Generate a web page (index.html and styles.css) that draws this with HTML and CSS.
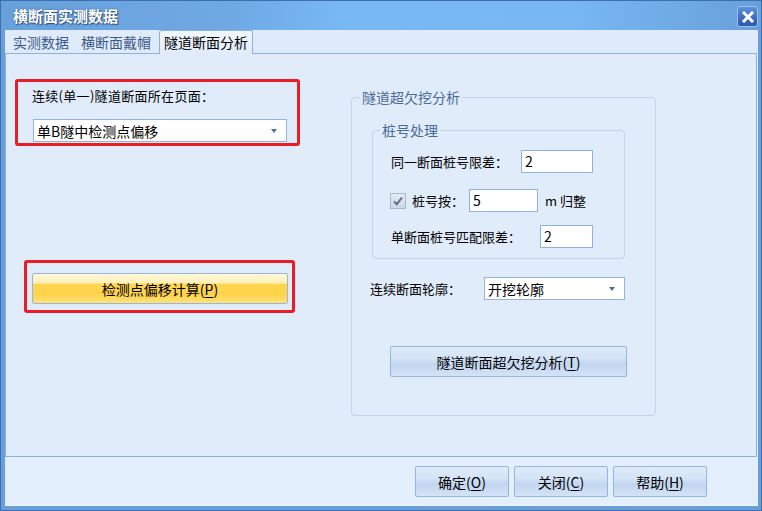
FILE: index.html
```html
<!DOCTYPE html>
<html lang="zh-CN">
<head>
<meta charset="utf-8">
<title>横断面实测数据</title>
<link rel="stylesheet" href="styles.css">
</head>
<body>
<div class="window">
  <div class="titlebar">
    <span class="title">横断面实测数据</span>
    <span class="close">
      <svg width="12" height="12" viewBox="0 0 12 12"><path d="M2 2 L10 10 M10 2 L2 10" stroke="#ffffff" stroke-width="3" stroke-linecap="square"/></svg>
    </span>
  </div>
  <div class="body">
    <div class="tabs">
      <div class="tab">实测数据</div>
      <div class="tab">横断面戴帽</div>
      <div class="tab active">隧道断面分析</div>
    </div>
    <div class="panel">
      <div class="left">
        <div class="redbox box1">
          <div class="label">连续(单一)隧道断面所在页面：</div>
          <div class="select sel-page"><span>单B隧中检测点偏移</span><i class="arrow"></i></div>
        </div>
        <div class="redbox box2">
          <div class="btn yellow calc">检测点偏移计算(<u>P</u>)</div>
        </div>
      </div>
      <fieldset class="group outer">
        <legend>隧道超欠挖分析</legend>
        <fieldset class="group inner">
          <legend>桩号处理</legend>
          <div class="row r1"><span class="lbl">同一断面桩号限差：</span><span class="input in1">2</span></div>
          <div class="row r2">
            <span class="check"><svg width="12" height="12" viewBox="0 0 12 12"><path d="M2 6.5 L4.8 9.2 L10 2.5" fill="none" stroke="#5a6e8c" stroke-width="2"/></svg></span>
            <span class="lbl">桩号按：</span><span class="input in2">5</span><span class="unit">m 归整</span>
          </div>
          <div class="row r3"><span class="lbl">单断面桩号匹配限差：</span><span class="input in3">2</span></div>
        </fieldset>
        <div class="row contour"><span class="lbl">连续断面轮廓：</span><div class="select sel-contour"><span>开挖轮廓</span><i class="arrow"></i></div></div>
        <div class="btn blue analyze">隧道断面超欠挖分析(<u>T</u>)</div>
      </fieldset>
    </div>
    <div class="footer">
      <div class="btn blue fbtn">确定(<u>O</u>)</div>
      <div class="btn blue fbtn">关闭(<u>C</u>)</div>
      <div class="btn blue fbtn last">帮助(<u>H</u>)</div>
    </div>
  </div>
</div>
</body>
</html>
```

FILE: styles.css
```css
* { box-sizing: border-box; }
html, body { margin: 0; padding: 0; }
body {
  width: 762px;
  height: 511px;
  overflow: hidden;
  font-family: "Noto Sans CJK SC", "Noto Sans", sans-serif;
  font-size: 13px;
  color: #000;
}
.window {
  width: 762px;
  height: 511px;
  border: 1px solid #3d6db5;
  background: #6a9ed9;
  display: flex;
  flex-direction: column;
}
.titlebar {
  height: 29px;
  flex: none;
  display: flex;
  align-items: center;
  justify-content: space-between;
  padding: 0 3px 0 12px;
  background: linear-gradient(to right, #68a0d9 0%, #6fa9e4 30%, #78b8f4 45%, #78b7f3 75%, #68a0d9 100%);
}
.title {
  font-size: 15px;
  font-weight: bold;
  color: #fff;
  text-shadow: 1px 1px 1px #2f4f80, 0 0 2px #3a5f95;
  line-height: 20px;
}
.close {
  width: 21px;
  height: 21px;
  margin-top: 2px;
  border: 1px solid #9cc0ec;
  border-radius: 3px;
  background: linear-gradient(to bottom, #5f92dc 0%, #3e70c4 50%, #2a5ab0 100%);
  display: flex;
  align-items: center;
  justify-content: center;
}
.body {
  flex: 1;
  margin: 0 3px 4px 4px;
  background: #e3effd;
  display: flex;
  flex-direction: column;
  border-bottom: 1px solid #f0f6fe;
}
.tabs {
  height: 23px;
  flex: none;
  display: flex;
  align-items: flex-end;
  padding-left: 2px;
  background: #dfebfa;
  position: relative;
  z-index: 1;
}
.tab {
  height: 22px;
  line-height: 22px;
  padding: 0 6px;
  font-size: 14px;
  color: #3c5a88;
}
.tab.active {
  margin-left: 2px;
  height: 24px;
  margin-bottom: -1px;
  padding: 0 4px;
  color: #000;
  background: linear-gradient(to bottom, #f2f7fe 0%, #e0ecfb 100%);
  border: 1px solid #8cb2e2;
  border-bottom: none;
  border-radius: 3px 3px 0 0;
  line-height: 22px;
}
.panel {
  height: 404px;
  flex: none;
  border: 1px solid #8cb2e2;
  background: #e0ecfa;
  display: flex;
  align-items: flex-start;
  margin-right: 1px;
}
.left {
  width: 285px;
  margin-left: 9px;
  margin-top: 25px;
  display: flex;
  flex-direction: column;
}
.redbox {
  border: 3px solid #ea1c24;
  border-radius: 3px;
}
.box1 {
  height: 67px;
  padding: 5px 0 0 14px;
}
.label {
  line-height: 18px;
  font-size: 13px;
  letter-spacing: 0.3px;
}
.select {
  height: 23px;
  background: #fff;
  border: 1px solid #92b3de;
  display: flex;
  align-items: center;
  justify-content: space-between;
  padding: 0 9px 0 3px;
  font-size: 14px;
}
.arrow {
  width: 0;
  height: 0;
  border-left: 3.5px solid transparent;
  border-right: 3.5px solid transparent;
  border-top: 4px solid #4d6f9f;
  margin-top: 1px;
}
.sel-page {
  width: 254px;
  margin-top: 14px;
  margin-left: 1px;
}
.box2 {
  margin-top: 114px;
  margin-left: 9px;
  width: 271px;
  height: 53px;
  padding: 10px 4px 0 5px;
}
.btn {
  height: 31px;
  border: 1px solid #98b6dd;
  border-radius: 2px;
  display: flex;
  align-items: center;
  justify-content: center;
  font-size: 14px;
}
.btn u { text-underline-offset: 2px; }
.yellow {
  width: 256px;
  background: linear-gradient(to bottom, #fff8dc 0%, #fff0b8 30%, #ffd650 36%, #ffd24a 70%, #ffe27a 100%);
}
.blue {
  background: linear-gradient(to bottom, #e0ebf9 0%, #d3e3f7 40%, #c2d6f0 60%, #d4e3f6 100%);
}
fieldset.group {
  margin: 0;
  padding: 0;
  border: 1px solid #c1d4ec;
  border-radius: 4px;
  min-width: 0;
}
fieldset.group > legend {
  padding: 0 2px;
  font-size: 14px;
  line-height: 18px;
  color: #4a6a98;
}
.outer {
  width: 305px;
  margin-left: 51px !important;
  margin-top: 34px !important;
  padding-bottom: 38px !important;
}
.outer > legend { margin-left: 8px; }
.inner {
  width: 253px;
  margin-left: 20px !important;
  margin-top: 15px !important;
  padding-bottom: 10px !important;
}
.inner > legend { margin-left: 7px; }
.row {
  display: flex;
  align-items: center;
  height: 23px;
}
.lbl { font-size: 13px; white-space: nowrap; }
.input {
  height: 23px;
  background: #fff;
  border: 1px solid #8fb2de;
  font-size: 14px;
  line-height: 21px;
  padding-left: 3px;
}
.r1 { margin-top: 11px; padding-left: 18px; }
.in1 { width: 72px; margin-left: 13px; }
.r2 { margin-top: 16px; padding-left: 17px; }
.check {
  width: 16px;
  height: 16px;
  border: 1px solid #a9bad0;
  background: linear-gradient(to bottom, #e4eaf2, #cdd7e4);
  display: flex;
  align-items: center;
  justify-content: center;
  margin-right: 6px;
}
.in2 { width: 69px; margin-left: 5px; }
.unit { margin-left: 7px; font-size: 13px; }
.r3 { margin-top: 13px; padding-left: 18px; }
.in3 { width: 53px; margin-left: 19px; }
.contour { margin-top: 18px; padding-left: 18px; }
.sel-contour { width: 141px; margin-left: 23px; }
.analyze {
  width: 237px;
  margin-top: 46px;
  margin-left: 38px;
}
.footer {
  flex: 1;
  display: flex;
  justify-content: flex-end;
  align-items: flex-start;
  padding: 9px 51px 0 0;
}
.fbtn {
  width: 94px;
  margin-left: 5px;
}
.fbtn:first-child { margin-left: 0; }
.fbtn.last { margin-left: 5px; }
```
